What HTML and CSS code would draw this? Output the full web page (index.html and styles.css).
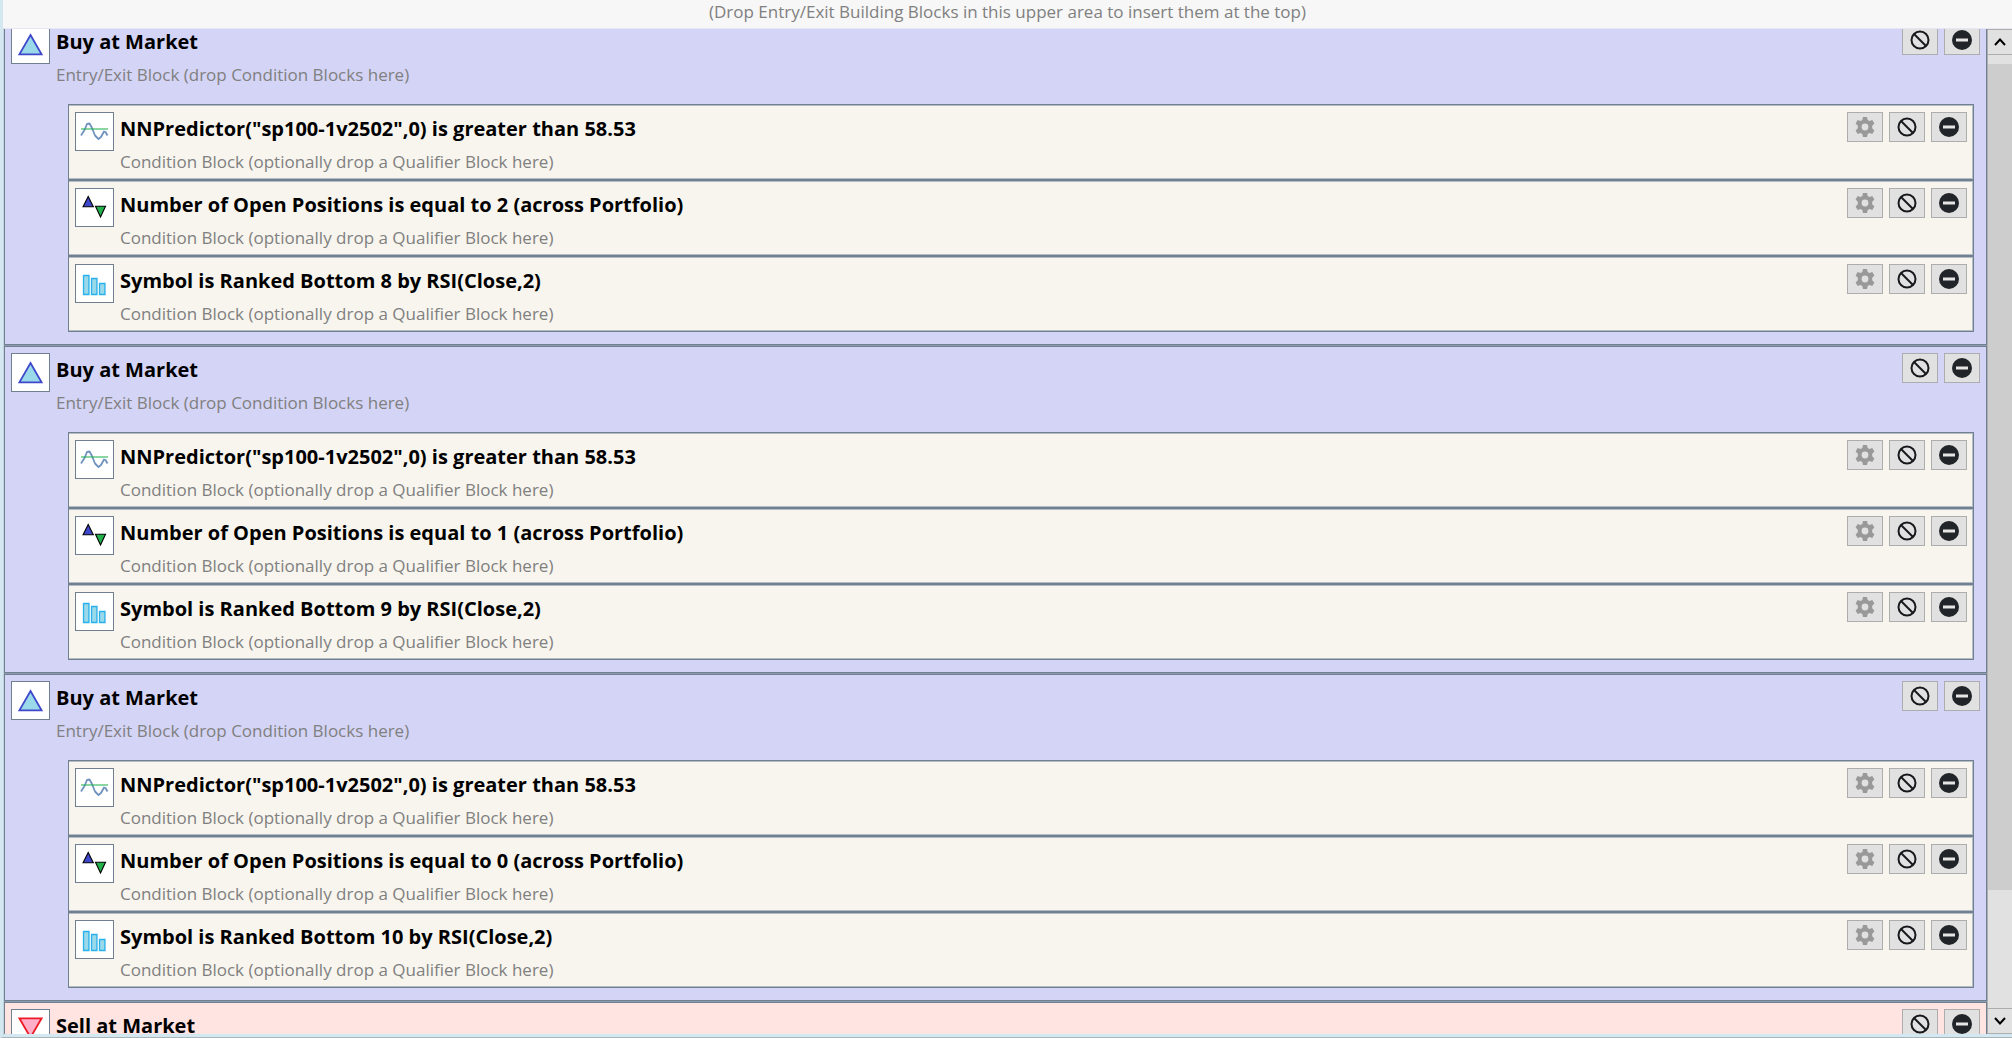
FILE: index.html
```html
<!DOCTYPE html>
<html lang="en">
<head>
<meta charset="utf-8">
<title>Building Blocks</title>
<link rel="stylesheet" href="styles.css">
</head>
<body>
<svg class="sprite" aria-hidden="true">
  <symbol id="i-buy" viewBox="0 0 37 37"><path d="M18.5 9 L29.6 28.3 H7.4 Z" fill="#99d9ea" stroke="#3f48cc" stroke-width="1.8"/></symbol>
  <symbol id="i-sell" viewBox="0 0 37 37"><path d="M18.5 27.5 L29.6 8.3 H7.4 Z" fill="#ffaec9" stroke="#ed1c24" stroke-width="1.8"/></symbol>
  <symbol id="i-wave" viewBox="0 0 37 37"><path d="M5 22.500 L8.500 17 L11 11 L13.500 10.500 L16 15 L19 22.500 L22.500 26 L25 24 L28 18.500 L29.500 19 L31.500 22.500" fill="none" stroke="#7092be" stroke-width="1.8" stroke-linejoin="round"/><path d="M5 16H32" stroke="#22b14c" stroke-opacity=".75" stroke-width="1.4"/></symbol>
  <symbol id="i-pos" viewBox="0 0 37 37"><path d="M12.200 7.500 L17.300 17.800 H7.100 Z" fill="#3f48cc" stroke="#000" stroke-width="1.1"/><path d="M24.500 28 L29.500 17.300 H19.500 Z" fill="#22b14c" stroke="#000" stroke-width="1.1"/></symbol>
  <symbol id="i-bars" viewBox="0 0 37 37"><path d="M7.500 10.500H13V29.500H7.500Z M15.500 13.500H21V29.500H15.500Z M23.500 18.500H29V29.500H23.500Z" fill="#99d9ea" stroke="#00a2e8" stroke-opacity=".8" stroke-width="1.300"/></symbol>
  <symbol id="i-gear" viewBox="0 0 20 20"><path fill="#999" fill-rule="evenodd" d="M8 0H12L12.700 2.900 L14.500 3.900 L17.300 3 L19.400 6.500 L17.200 8.800 V11.200 L19.400 13.500 L17.300 17 L14.500 16.100 L12.700 17.100 L12 20H8L7.300 17.100 L5.500 16.100 L2.700 17 L.6 13.500 L2.800 11.200 V8.800 L.6 6.500 L2.700 3 L5.500 3.900 L7.300 2.900Z M10 6.600A3.400 3.400 0 1 0 10 13.400A3.400 3.400 0 1 0 10 6.600Z"/></symbol>
  <symbol id="i-ban" viewBox="0 0 20 20"><circle cx="10" cy="10" r="8.500" fill="none" stroke="#17191d" stroke-width="2"/><path d="M4 4L16 16" stroke="#17191d" stroke-width="2"/></symbol>
  <symbol id="i-minus" viewBox="0 0 20 20"><circle cx="10" cy="10" r="10" fill="#212429"/><path d="M4 10H16" stroke="#e6e6e6" stroke-width="3"/></symbol>
</svg>
<div class="panel">
  <header class="drop-hint">(Drop Entry/Exit Building Blocks in this upper area to insert them at the top)</header>
  <div class="viewport">
    <main class="list" id="list"></main>
    <div class="scrollbar">
      <button class="arrow" aria-label="Scroll up"><svg width="12" height="8" viewBox="0 0 12 8"><path d="M1 7L6 1.500L11 7" fill="none" stroke="#000" stroke-width="2"/></svg></button>
      <div class="track"><div class="thumb"></div></div>
      <button class="arrow" aria-label="Scroll down"><svg width="12" height="8" viewBox="0 0 12 8"><path d="M1 1L6 6.500L11 1" fill="none" stroke="#000" stroke-width="2"/></svg></button>
    </div>
  </div>
</div>
<script src="app.js"></script>
</body>
</html>
```
FILE: styles.css
```css
* { box-sizing: border-box; }
body { margin: 0; font-family: "Segoe UI", "Open Sans", sans-serif; font-size: 17px; color: #000; }
.sprite { display: none; }
.panel { display: flex; flex-direction: column; height: 100vh; border-left: 3px solid #d3e8f0; border-bottom: 1px solid #a9b4b9; background: #f7f7f7; }
.drop-hint { flex: none; height: 28px; line-height: 24px; text-align: center; color: #808080; white-space: nowrap; }
.viewport { flex: 1; min-height: 0; display: flex; border-top: 1px solid #e6e6f4; border-bottom: 3px solid #d3e8f0; border-left: 1px solid #c3d3dc; }
.list { flex: 1; min-width: 0; overflow: hidden; background: #8c9ab0; }

.block { border: 1px solid #708090; margin-bottom: 1px; padding-bottom: 12px; }
.block:first-child { margin-top: -11px; }
.buy { background: #d4d4f6; }
.sell { background: #ffe4e1; }
.head { display: flex; align-items: flex-start; gap: 6px; height: 85px; padding: 6px 6px 0; }
.conditions { margin: 0 12px 0 63px; }
.condition { display: flex; align-items: flex-start; gap: 6px; height: 76px; padding: 7px 6px 0; border: 1px solid #708090; background: #f8f5ee; box-shadow: inset -1px 1px #b4bcc4, inset 0 -1px #b4bcc4; }
.icon { flex: none; width: 39px; height: 39px; border: 1px solid #708090; background: #fff; }
.icon svg { display: block; width: 37px; height: 37px; }
.text { flex: 1; min-width: 0; white-space: nowrap; }
.title { margin: 0; font-size: 20px; line-height: 34px; font-weight: 700; }
.sub { margin: 0; line-height: 32px; color: #808080; }
.actions { display: flex; gap: 6px; }
.actions button { display: flex; align-items: center; justify-content: center; width: 36px; height: 30px; padding: 0; border: 1px solid #adadad; background: #e1e1e1; }
.actions svg { width: 20px; height: 20px; }

.scrollbar { flex: none; width: 25px; display: flex; flex-direction: column; background: #e1e1e1; border-left: 1px solid #adadad; }
.arrow { flex: none; height: 26px; padding: 0; border: 0 solid #adadad; border-width: 1px 0; background: #e1e1e1; display: flex; align-items: center; justify-content: center; }
.track { flex: 1; padding-top: 9px; }
.thumb { height: calc(100% * 7 / 8); background: #cdcdcd; }
```
FILE: app.js
```js
const icon = (name) => `<svg aria-hidden="true"><use href="#i-${name}"/></svg>`;
const labels = { gear: "Settings", ban: "Disable", minus: "Remove" };
const actions = (names) =>
  `<div class="actions">${names.map((n) => `<button aria-label="${labels[n]}">${icon(n)}</button>`).join("")}</div>`;
const text = (title, sub) =>
  `<div class="text"><h2 class="title">${title}</h2>${sub ? `<p class="sub">${sub}</p>` : ""}</div>`;

const condition = ([name, title]) => `
  <div class="condition"><div class="icon">${icon(name)}</div>
  ${text(title, "Condition Block (optionally drop a Qualifier Block here)")}
  ${actions(["gear", "ban", "minus"])}</div>`;

const block = ({ kind, title, sub, conditions }) => `
  <section class="block ${kind}">
    <div class="head"><div class="icon">${icon(kind)}</div>
    ${text(title, sub)}
    ${actions(["ban", "minus"])}</div>
    <div class="conditions">${conditions.map(condition).join("")}</div>
  </section>`;

const buy = (open, rank) => ({
  kind: "buy",
  title: "Buy at Market",
  sub: "Entry/Exit Block (drop Condition Blocks here)",
  conditions: [
    ["wave", 'NNPredictor("sp100-1v2502",0) is greater than 58.53'],
    ["pos", `Number of Open Positions is equal to ${open} (across Portfolio)`],
    ["bars", `Symbol is Ranked Bottom ${rank} by RSI(Close,2)`],
  ],
});

document.getElementById("list").innerHTML = [
  buy(2, 8), buy(1, 9), buy(0, 10),
  { kind: "sell", title: "Sell at Market", conditions: [] },
].map(block).join("");
```
